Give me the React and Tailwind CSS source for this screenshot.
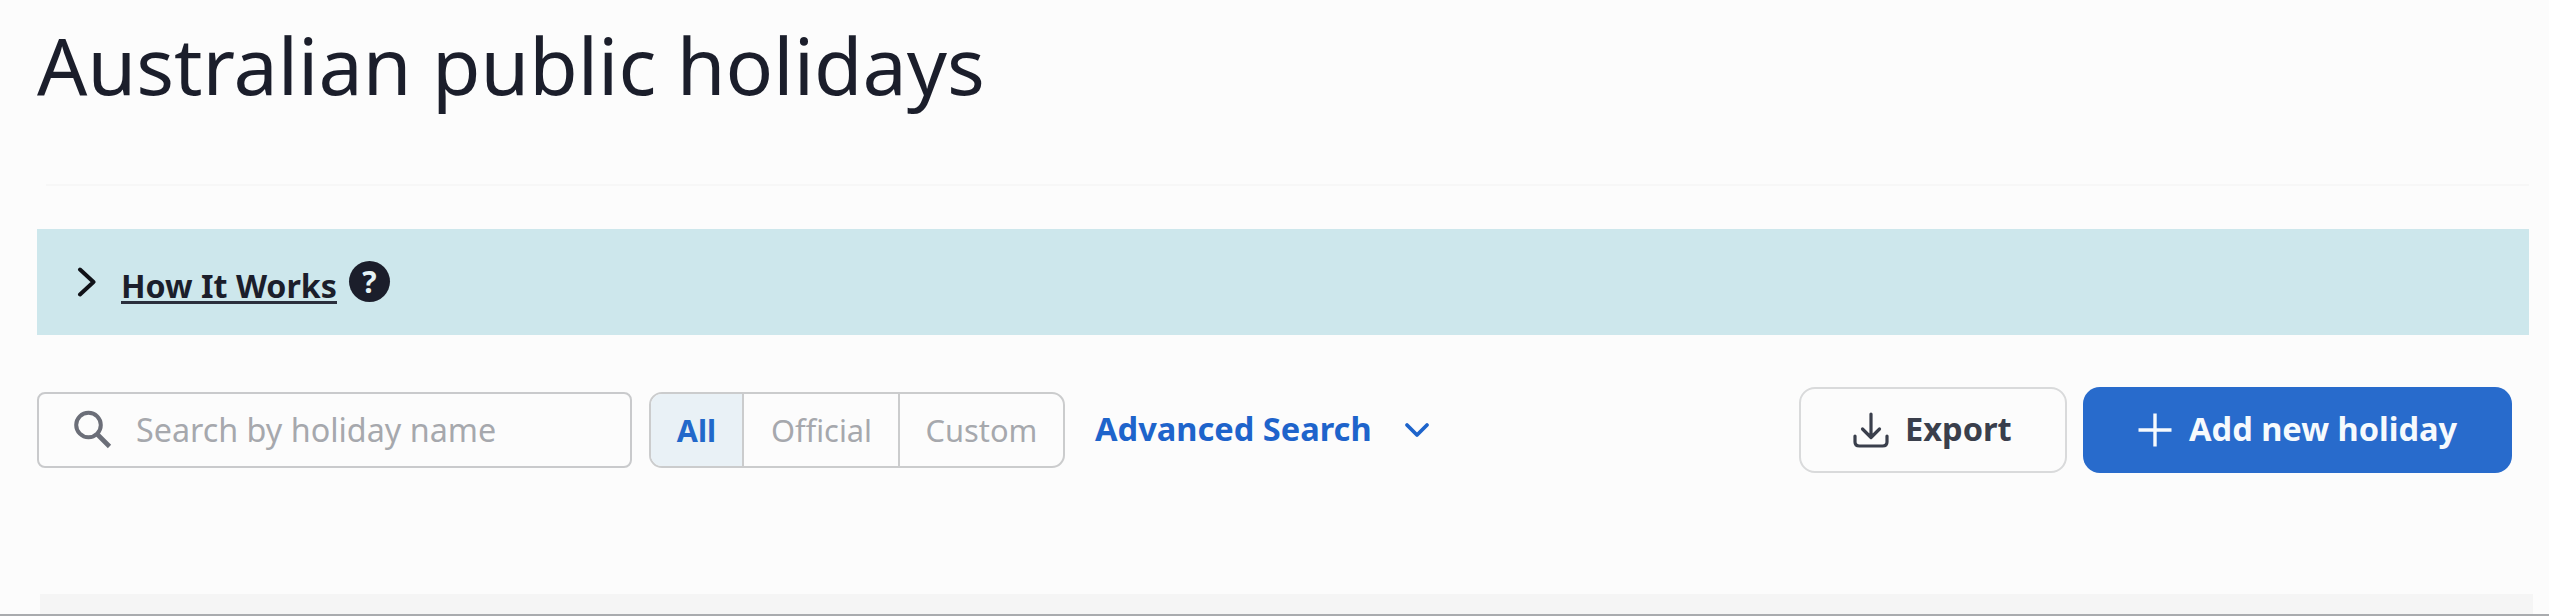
function SearchIcon() {
  return (
    <svg className="ml-[34px] h-[39px] w-[40px] shrink-0" viewBox="0 0 40 39" fill="none" stroke="#6b6e78" strokeWidth="4">
      <circle cx="15.5" cy="15" r="12.3" />
      <path d="M24 24 L36.500 36.500" strokeWidth="4.6" />
    </svg>
  );
}

function HelpBadge() {
  return (
    <span className="mt-[32px] ml-[12px] flex size-[41px] items-center justify-center rounded-full bg-[#1b1e2b] text-[30px] leading-none font-bold text-[#e6f3f6]">
      ?
    </span>
  );
}

function Title() {
  return (
    <header className="ml-[37px] h-[184px] pt-[26px]">
      <h1 className="text-[78.9px] leading-none font-[430] text-[#1b1e2b]">Australian public holidays</h1>
    </header>
  );
}

function HowItWorks() {
  return (
    <section className="mt-[43px] mr-[20px] ml-[37px] flex h-[106px] items-start bg-[#cde7ec]">
      <svg className="mt-[38px] ml-[40px] h-[30px] w-[20px]" viewBox="0 0 20 30" fill="none" stroke="#101218" strokeWidth="4" strokeLinecap="round" strokeLinejoin="round">
        <path d="M3 2.5 L16.5 15 L3 27.5" />
      </svg>
      <a href="#how" className="mt-[41px] ml-[24px] h-[34px] border-b-[3px] border-[#2b2f3c] text-[32.2px] leading-none font-bold text-[#1b1e2b]">
        How It Works
      </a>
      <HelpBadge />
    </section>
  );
}

function Filters() {
  return (
    <div className="ml-[17px] flex h-[76px] w-[416px] overflow-hidden rounded-[13px] border-2 border-[#cbcccd] text-[30.8px] leading-none">
      <button className="w-[93px] border-r-2 border-[#cbcccd] bg-[#e9f1f6] pt-px text-[30.5px] font-bold text-[#2268ca]">All</button>
      <button className="w-[156px] border-r-2 border-[#cbcccd] pt-px pl-px text-[#a6a8ad]">Official</button>
      <button className="flex-1 pt-px text-[#a6a8ad]">Custom</button>
    </div>
  );
}

function Toolbar() {
  return (
    <div className="mt-[51px] mr-[37px] ml-[37px] flex h-[87px] items-center">
      <label className="flex h-[76px] w-[595px] items-center rounded-[8px] border-2 border-[#c9cacc]">
        <SearchIcon />
        <span className="ml-[23px] text-[32.3px] leading-none whitespace-nowrap text-[#a6a8ad]">Search by holiday name</span>
      </label>
      <Filters />
      <button className="ml-[30px] flex items-center text-[32.6px] leading-none font-bold whitespace-nowrap text-[#1e64cb]">
        Advanced Search
        <svg className="ml-[32px] h-[16px] w-[26px]" viewBox="0 0 26 16" fill="none" stroke="currentColor" strokeWidth="3.8" strokeLinecap="round" strokeLinejoin="round">
          <path d="M3 3 L13 13 L23 3" />
        </svg>
      </button>
      <button className="ml-auto flex h-[86px] w-[268px] items-center rounded-[16px] border-2 border-[#d9dadb] text-[32.6px] leading-none font-bold text-[#3a3f4c]">
        <svg className="ml-[52px] h-[36px] w-[36px]" viewBox="0 0 36 36" fill="none" stroke="currentColor" strokeWidth="3.2" strokeLinecap="round" strokeLinejoin="round">
          <path d="M18 2 V25 M9.5 17 L18 25.5 L26.5 17 M2 24 V30 Q2 34 6.500 34 H29.500 Q34 34 34 30 V24" />
        </svg>
        <span className="ml-[16px]">Export</span>
      </button>
      <button className="ml-[16px] flex h-[86px] w-[429px] items-center rounded-[17px] bg-[#286bcc] text-[32.6px] leading-none font-bold whitespace-nowrap text-[#f6fafd]">
        <svg className="ml-[55px] size-[34px]" viewBox="0 0 34 34" fill="none" stroke="currentColor" strokeWidth="3.4">
          <path d="M17 0.500 V33.500 M0.500 17 H33.500" />
        </svg>
        <span className="ml-[17px]">Add new holiday</span>
      </button>
    </div>
  );
}

export default function App() {
  return (
    <main className="flex h-[616px] w-full flex-col overflow-hidden bg-[#fcfcfc] font-['Noto_Sans',sans-serif]">
      <Title />
      <div className="mr-[20px] ml-[46px] h-[2px] shrink-0 bg-[#f7f7f7]" />
      <HowItWorks />
      <Toolbar />
      <div className="mt-auto mr-[16px] ml-[40px] h-[20px] shrink-0 bg-[#f5f5f5]" />
      <div className="h-[2px] shrink-0 bg-[#a9abae]" />
    </main>
  );
}
